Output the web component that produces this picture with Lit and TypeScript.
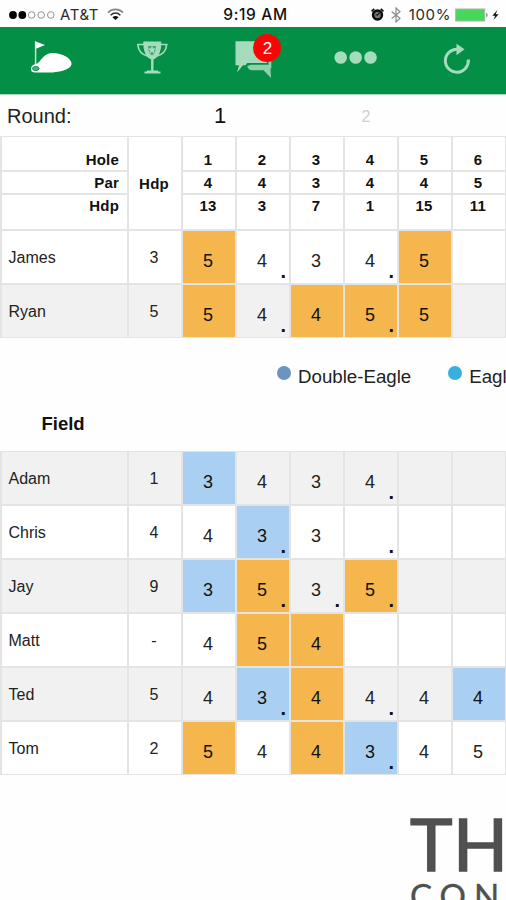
import { LitElement, html, svg, css, nothing } from "lit";
import { customElement, property } from "lit/decorators.js";
import { classMap } from "lit/directives/class-map.js";

type Tone = "bogey" | "birdie" | "";
interface Score { value: string; tone: Tone; dot: boolean; }
interface Player { name: string; hdp: string; scores: Score[]; }

/* Compact score notation: "5+" bogey, "3-" birdie, "." handicap stroke */
const parse = (name: string, hdp: string, row: string): Player => ({
  name,
  hdp,
  scores: row.split("|").map((s) => ({
    value: s.replace(/[^0-9]/g, ""),
    tone: s.includes("+") ? "bogey" : s.includes("-") ? "birdie" : "",
    dot: s.includes("."),
  })),
});

const group = [
  parse("James", "3", "5+|4.|3|4.|5+|"),
  parse("Ryan", "5", "5+|4.|4+|5+.|5+|"),
];

const field = [
  parse("Adam", "1", "3-|4|3|4.||"),
  parse("Chris", "4", "4|3-.|3|.||"),
  parse("Jay", "9", "3-|5+.|3.|5+.||"),
  parse("Matt", "-", "4|5+|4+|||"),
  parse("Ted", "5", "4|3-.|4+|4.|4|4-"),
  parse("Tom", "2", "5+|4|4+|3-.|4|5"),
];

const holes = [
  ["1", "2", "3", "4", "5", "6"],
  ["4", "4", "3", "4", "4", "5"],
  ["13", "3", "7", "1", "15", "11"],
];

@customElement("status-bar")
class StatusBar extends LitElement {
  static styles = css`
    :host { display: grid; grid-template-columns: 1fr auto 1fr; align-items: center; height: 27px; padding: 2px 5px 0 8px; box-sizing: border-box; font: 15px/20px Inter, sans-serif; color: #2a2a2a; }
    .side { display: flex; align-items: center; }
    .right { justify-content: flex-end; }
    .carrier { margin: 0 8px 0 5px; letter-spacing: 0.6px; }
    .time { font-weight: 500; font-size: 15.5px; letter-spacing: 0.65px; padding-left: 2px; color: #111; }
    .alarm { margin-right: 7px; margin-left: -6px; }
    .bt { margin-right: 8px; }
    .pct { margin-right: 4px; letter-spacing: 0.6px; }
    svg { display: block; }
  `;
  render() {
    return html`
      <div class="side">
        <svg width="47" height="10" viewBox="0 0 47 10">
          ${[5, 14.3, 23.6, 33.2, 42.8].map((x, i) => svg`<circle cx=${x} cy="5" r=${i < 2 ? 3.9 : 3.3} fill=${i < 2 ? "#000" : "none"} stroke=${i < 2 ? "none" : "#777"} stroke-width="0.8"/>`)}
        </svg>
        <span class="carrier">AT&amp;T</span>
        <svg width="17" height="13" viewBox="0 0 17 13" fill="none" stroke="#333" stroke-width="1.6">
          <path d="M1 4.6C5 .3 12 .3 16 4.6" stroke="#888"/><path d="M3.6 7.2c3-3 6.8-3 9.8 0"/><path d="M5.4 9.2c2-1.7 4.2-1.7 6.2 0L8.5 12z" fill="#111" stroke="none"/>
        </svg>
      </div>
      <div class="time">9:19 AM</div>
      <div class="side right">
        <svg class="alarm" width="13" height="13" viewBox="0 0 13 13">
          <path d="M.6 3.4 3.2.8M12.4 3.4 9.8.8" stroke="#111" stroke-width="1.8"/>
          <circle cx="6.5" cy="7" r="4.5" fill="#777" stroke="#0a0a0a" stroke-width="2.4"/>
          <path d="M6.5 7 8.6 4.6M6.5 7H4.6" stroke="#111" stroke-width="1.2"/>
        </svg>
        <svg class="bt" width="10" height="16" viewBox="0 0 10 16" fill="none" stroke="#8b8b8b" stroke-width="1.2"><path d="M.7 4.5 9 11.3 5 15V1l4 3.700L.7 11.500"/></svg>
        <span class="pct">100%</span>
        <svg width="46" height="14" viewBox="0 0 46 14">
          <rect x=".7" y="1" width="29" height="12" fill="#46d75c" stroke="#a4b9a4" stroke-width="1"/>
          <path d="M31 5h1q1.500 2 0 4h-1z" fill="#999"/>
          <path d="M42.500 2 37.300 7.700h2.900L38.400 12l5.300-5.800h-3z" fill="#111"/>
        </svg>
      </div>`;
  }
}

@customElement("nav-tabs")
class NavTabs extends LitElement {
  static styles = css`
    :host { display: grid; grid-template-columns: repeat(5, 1fr); height: 67px; background: #038f45; border-bottom: 1px solid #a9d9bf; }
    .tab { display: flex; justify-content: center; }
    svg { display: block; height: 67px; }
    .more { padding-left: 2px; }
    .reload { padding-left: 4px; }
    .chat { position: relative; }
    .badge { position: absolute; left: 51px; top: 7px; width: 28px; height: 28px; border-radius: 50%; background: #fa0505; color: #fff; font: 17px/29px "Liberation Sans", sans-serif; text-align: center; }
  `;
  render() {
    return html`
      <div class="tab"><svg width="50" viewBox="0 0 50 67">
        <path d="M9.600 14.500V38" stroke="#c4e6d2" stroke-width="1.500"/>
        <path d="M9 14.200 19 18 10 21.800z" fill="#fff"/>
        <path d="M5 41.500Q5.500 37.500 10 37C15 35.500 16.500 27 25 26c9-1 20.500 4.500 20.500 10.500C45.500 43 33 45 25 45.600H9Q4.600 45.300 5 41.500z" fill="#fff"/>
        <ellipse cx="9.800" cy="41.500" rx="3.300" ry="2" fill="#55b07f" stroke="#128d4c" stroke-width="1"/>
      </svg></div>
      <div class="tab"><svg width="40" viewBox="0 0 40 67" fill="none">
        <path d="M11.700 15h17.200q0 15-8.600 17.500Q11.700 30 11.700 15z" fill="#a5dcbc" stroke="#a5dcbc"/>
        <path d="M16 19h8q0 7-4 9.500Q16 26 16 19z" fill="#43aa70"/>
        <path d="M20 18.500 21.200 21.300 24 21.500 22 23.500 22.500 26.500 20 25 17.500 26.500 18 23.500 16 21.500 18.800 21.300z" fill="#a5dcbc"/>
        <path d="M12 17.500H5.800Q6.500 27 16.500 29.500M28.500 17.500h6.200Q34 27 24 29.500" stroke="#a5dcbc" stroke-width="1.700"/>
        <path d="M20.300 31V44" stroke="#a5dcbc" stroke-width="2.400"/><path d="M12.500 45.500h16M15 44.300h11" stroke="#a5dcbc" stroke-width="1.800"/>
      </svg></div>
      <div class="tab chat"><svg width="40" viewBox="0 0 40 67">
        <path d="M35.500 22h2.800v19.500h-.8l.5 9.500-7.500-7.700H18.500q-3.700-.8-4.300-4.300l4-1.200H35.500z" fill="#8fd0ad"/>
        <path d="M2.500 14.200H34V36H14.300l-1.800 2.200H10L4 45.500 6 38.200H2.500z" fill="#a5dcbc"/>
      </svg><span class="badge">2</span></div>
      <div class="tab more"><svg width="44" viewBox="0 0 44 67" fill="#a5dcbc">
        <circle cx="7.700" cy="30.500" r="6.300"/><circle cx="22.700" cy="30.500" r="6.300"/><circle cx="37.500" cy="30.500" r="6.300"/>
      </svg></div>
      <div class="tab reload"><svg width="30" viewBox="0 0 30 67">
        <path d="M26.300 32.500A11.500 11.500 0 1 1 15.500 22.200H19" fill="none" stroke="#a5dcbc" stroke-width="3"/>
        <path d="M14.500 16.800 22.500 22.300 14.500 28.300z" fill="#a5dcbc"/>
      </svg></div>`;
  }
}

@customElement("score-grid")
class ScoreGrid extends LitElement {
  @property({ attribute: false }) players: Player[] = [];
  @property({ type: Boolean }) header = false;
  @property({ type: Boolean }) shadeFirst = false;

  static styles = css`
    :host { display: block; }
    .grid { display: grid; grid-template-columns: 125px repeat(7, 52px); grid-auto-rows: 52px; gap: 2px; padding: 1px 2px; width: 503px; background: #e4e4e4; }
    .with-header { grid-template-rows: 33px 21px 34px; }
    .cell { position: relative; display: flex; align-items: center; justify-content: center; box-sizing: border-box; background: #fff; color: #222; overflow: hidden; }
    .head { font-weight: 700; font-size: 15px; letter-spacing: 0.2px; padding-right: 2px; color: #111; }
    .head.label { justify-content: flex-end; padding-right: 8px; }
    .r0 { padding-top: 12px; }
    .r1 { padding-top: 0; }
    .r2 { padding-bottom: 13px; }
    .span { grid-column: 2; grid-row: 1 / span 3; padding-top: 1px; }
    .name { justify-content: flex-start; padding: 2px 0 0 6.500px; font-size: 16px; }
    .hdp { padding: 2px 2px 0 0; font-size: 16px; }
    .score { padding: 8px 2px 0 0; font-size: 18px; }
    .shade { background: #f1f1f1; }
    .bogey { background: #f4b64d; color: #111; }
    .birdie { background: #a9cff3; color: #111; }
    .dot { position: absolute; right: 3px; bottom: 2px; font: 700 20px/20px "Liberation Sans", sans-serif; color: #111; }
  `;

  render() {
    return html`<div class=${classMap({ grid: true, "with-header": this.header })}>
      ${this.header ? this.renderHeader() : nothing}
      ${this.players.map((p, i) => {
        const shade = (i % 2 === 0) === this.shadeFirst;
        return html`
          <div class=${classMap({ cell: true, name: true, shade })}>${p.name}</div>
          <div class=${classMap({ cell: true, hdp: true, shade })}>${p.hdp}</div>
          ${p.scores.map((s) => html`<div class=${classMap({ cell: true, score: true, shade: shade && !s.tone, bogey: s.tone === "bogey", birdie: s.tone === "birdie" })}>${s.value}${s.dot ? html`<span class="dot">.</span>` : nothing}</div>`)}`;
      })}
    </div>`;
  }

  renderHeader() {
    return html`<div class="cell head span">Hdp</div>
      ${["Hole", "Par", "Hdp"].map((label, r) => html`
        <div class="cell head label r${r}">${label}</div>
        ${holes[r].map((h) => html`<div class="cell head r${r}">${h}</div>`)}`)}`;
  }
}

@customElement("app-root")
class AppRoot extends LitElement {
  static styles = css`
    :host { display: block; width: 506px; height: 900px; overflow: hidden; background: #fefefe; font-family: "Liberation Sans", Arial, sans-serif; color: #222; }
    .rounds { display: grid; grid-template-columns: 147px 146px 146px; height: 41px; line-height: 42px; text-align: center; }
    .label { text-align: left; padding-left: 7px; font-size: 20px; line-height: 43px; }
    .current { font-size: 22px; line-height: 41px; color: #111; }
    .other { font-size: 16px; line-height: 43px; color: #cfcfcf; }
    .legend { display: flex; align-items: center; height: 78px; padding-left: 277px; font-size: 18.700px; white-space: nowrap; }
    .item { display: flex; align-items: center; gap: 7px; margin-right: 37px; }
    .swatch { width: 14px; height: 14px; border-radius: 50%; margin-bottom: 9px; flex: none; }
    .double { background: #6c95bd; }
    .eagle { background: #37b0df; }
    h2 { margin: 0; padding: 0 0 19px 41.500px; font-size: 18.500px; line-height: 16px; color: #111; }
    .sponsor { margin: 31px 0 0 410px; font-family: Lato, sans-serif; color: #505050; white-space: nowrap; }
    .big { font-weight: 400; font-size: 72px; line-height: 74px; letter-spacing: 0.500px; -webkit-text-stroke: 1.500px #505050; }
    .small { font-size: 33px; line-height: 36px; margin-top: -3px; letter-spacing: 8px; -webkit-text-stroke: 0.400px #505050; }
  `;
  render() {
    return html`
      <status-bar></status-bar>
      <nav-tabs></nav-tabs>
      <div class="rounds"><span class="label">Round:</span><span class="current">1</span><span class="other">2</span></div>
      <score-grid header .players=${group}></score-grid>
      <div class="legend">
        <span class="item"><i class="swatch double"></i>Double-Eagle</span>
        <span class="item"><i class="swatch eagle"></i>Eagle</span>
      </div>
      <h2>Field</h2>
      <score-grid .shadeFirst=${true} .players=${field}></score-grid>
      <div class="sponsor"><div class="big">TH</div><div class="small">CON</div></div>`;
  }
}
